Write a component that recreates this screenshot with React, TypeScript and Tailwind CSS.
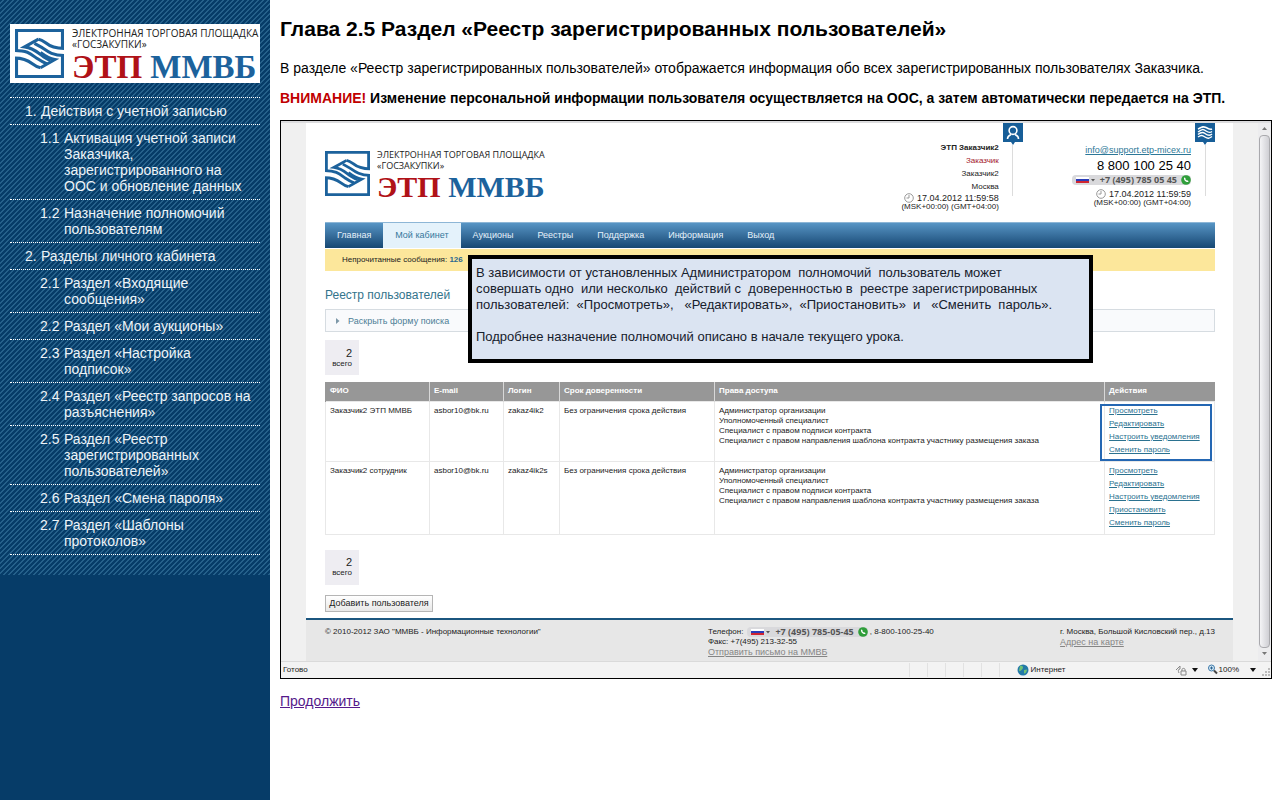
import React from "react";

type Item = { num: string; title: string; level: 1 | 2 };

const menu: Item[] = [
  { num: "1.", title: "Действия с учетной записью", level: 1 },
  { num: "1.1", title: "Активация учетной записи Заказчика, зарегистрированного на ООС и обновление данных", level: 2 },
  { num: "1.2", title: "Назначение полномочий пользователям", level: 2 },
  { num: "2.", title: "Разделы личного кабинета", level: 1 },
  { num: "2.1", title: "Раздел «Входящие сообщения»", level: 2 },
  { num: "2.2", title: "Раздел «Мои аукционы»", level: 2 },
  { num: "2.3", title: "Раздел «Настройка подписок»", level: 2 },
  { num: "2.4", title: "Раздел «Реестр запросов на разъяснения»", level: 2 },
  { num: "2.5", title: "Раздел «Реестр зарегистрированных пользователей»", level: 2 },
  { num: "2.6", title: "Раздел «Смена пароля»", level: 2 },
  { num: "2.7", title: "Раздел «Шаблоны протоколов»", level: 2 },
];

const rights = [
  "Администратор организации",
  "Уполномоченный специалист",
  "Специалист с правом подписи контракта",
  "Специалист с правом направления шаблона контракта участнику размещения заказа",
];

const users = [
  {
    name: "Заказчик2 ЭТП ММВБ",
    login: "zakaz4ik2",
    actions: ["Просмотреть", "Редактировать", "Настроить уведомления", "Сменить пароль"],
    marked: true,
  },
  {
    name: "Заказчик2 сотрудник",
    login: "zakaz4ik2s",
    actions: ["Просмотреть", "Редактировать", "Настроить уведомления", "Приостановить", "Сменить пароль"],
    marked: false,
  },
];

function LogoMark({ className }: { className: string }) {
  return (
    <svg viewBox="0 0 48 48" className={className} fill="none" stroke="#1c629c" strokeWidth="3" aria-hidden="true">
      <path d="M1.500 20.500V1.500H46.500V19" />
      <path d="M1.500 28V46.500H46.500V26" />
      <path d="M0 21C12 21 15 24 21 28.500C24 30.500 27 32.500 31 34" />
      <path d="M0 28.500C9 28.500 13 31 17 34C19 35.500 22 37.500 25 38" />
      <path d="M48 19C37 19 33 16 30 13.500C28 12 26 10.500 23 10" />
      <path d="M48 26C37 26 32 22 27 18.500L19 14" />
      <path d="M23 10L9.500 17.500C18 18.500 22 23 27 26.500C30 28.500 32 30 35 30.500" />
      <path d="M25 38L39 30C33 29 29 26 25 23" />
    </svg>
  );
}

function Brand({ small = false }: { small?: boolean }) {
  return (
    <div className={small ? "flex gap-[7px]" : "flex gap-2"}>
      <LogoMark className={small ? "mt-[2px] size-[45px] shrink-0" : "mt-px size-[49px] shrink-0"} />
      <div className="whitespace-nowrap text-[#222]">
        <div
          className={
            small
              ? "font-['Open_Sans','Noto_Sans',sans-serif] text-[9px] leading-[11px]"
              : "font-['Open_Sans','Noto_Sans',sans-serif] text-[10px] leading-[11px]"
          }
        >
          ЭЛЕКТРОННАЯ ТОРГОВАЯ ПЛОЩАДКА
          <br />
          «ГОСЗАКУПКИ»
        </div>
        <div
          className={
            small
              ? "font-['Liberation_Serif',serif] text-[30px] font-bold leading-[31px] text-[#1c629c]"
              : "font-['Liberation_Serif',serif] text-[33px] font-bold leading-[34px] text-[#1c629c]"
          }
        >
          <span className="text-[#b01218]">ЭТП</span> ММВБ
        </div>
      </div>
    </div>
  );
}

function Clock() {
  return (
    <svg viewBox="0 0 10 10" className="size-[10px]" fill="none" stroke="#999" aria-hidden="true">
      <circle cx="5" cy="5" r="4.300" />
      <path d="M5 2V5H2.500" />
    </svg>
  );
}

function Phone({ number }: { number: string }) {
  return (
    <span className="inline-flex h-[10px] items-center gap-1 rounded-sm bg-[#d9d9dc] pl-1 font-['Open_Sans',sans-serif] text-[9px] font-bold leading-[10px] text-[#555]">
      <svg viewBox="0 0 20 8" className="h-2 w-5" aria-hidden="true">
        <path d="M0 1H13V3H0Z" fill="#fff" />
        <path d="M0 3H13V5H0Z" fill="#2a3cb8" />
        <path d="M0 5H13V7H0Z" fill="#d02531" />
        <path d="M15 3H19L17 5.500Z" fill="#555" />
      </svg>
      {number}
      <svg viewBox="0 0 10 10" className="size-[10px]" aria-hidden="true">
        <circle cx="5" cy="5" r="4.800" fill="#2f9e3a" />
        <path d="M3 2.500C2.500 5 5 7.500 7.500 7L7 5.500L5.800 5.600L4.400 4.200L4.500 3Z" fill="#fff" />
      </svg>
    </span>
  );
}

function Badge({ kind }: { kind: "user" | "brand" }) {
  return (
    <div className="flex w-5 flex-col items-center">
      <svg viewBox="0 0 20 22" className="h-[22px] w-5 shrink-0" fill="none" aria-hidden="true">
        <path d="M0 0H20V19H12L10 22L8 19H0Z" fill="#175e98" />
        {kind === "user" ? (
          <g stroke="#fff" strokeWidth="1.600">
            <circle cx="10" cy="7.500" r="3.900" />
            <path d="M4.500 16C4.500 13 6 12.500 8 11.500M15.500 16C15.500 13 14 12.500 12 11.500" />
          </g>
        ) : (
          <g stroke="#fff" strokeWidth="1.500">
            <path d="M3 6C7 4 8 3 11 4.500S15 7 17 6" />
            <path d="M3 9C7 6 8 6 11 8S15 10 17 8.500" />
            <path d="M3 11.500C6 9 8 9 10 10.500S15 13 17 11" />
            <path d="M3 14C6 12 7 12 10 14S14 15.500 17 13.500" />
          </g>
        )}
      </svg>
      <div className="w-px grow bg-[#dcdcdc]" />
    </div>
  );
}

function Total() {
  return (
    <div className="flex h-[35px] w-[34px] flex-col items-end justify-center bg-[#eeedf2] pr-[7px] text-[8px] leading-[10px] text-[#222]">
      <span className="text-[11px] leading-3">2</span>
      <span>всего</span>
    </div>
  );
}

function Stamp({ time }: { time: string }) {
  return (
    <>
      <div className="flex items-center justify-end gap-[3px] text-[9px] leading-[10px] text-[#222]">
        <Clock />
        {time}
      </div>
      <div className="text-[8px] leading-[8px]">(MSK+00:00) (GMT+04:00)</div>
    </>
  );
}

const nav = ["Главная", "Мой кабинет", "Аукционы", "Реестры", "Поддержка", "Информация", "Выход"];

export default function App() {
  return (
    <div className="flex min-h-screen bg-white font-['Liberation_Sans',Arial,sans-serif] text-black">
      <aside className="w-[270px] shrink-0 bg-[#063c68] text-[14px] leading-4 text-[#eef4f8]">
        <div className="bg-[linear-gradient(135deg,#063c68_25%,#25608a_25%_50%,#063c68_50%_75%,#25608a_75%)] bg-[length:5px_5px] px-[10px] pb-5 pt-6">
          <div className="h-[59px] bg-white py-1 pl-[5px]">
            <Brand />
          </div>
          <nav className="mt-[14px] border-t border-dotted border-white">
            {menu.map((m) => (
              <a
                key={m.num}
                href="#"
                className={
                  m.level === 1
                    ? "flex border-b border-dotted border-white py-[5px] pl-[15px] pr-[6px]"
                    : "flex border-b border-dotted border-white py-[5px] pl-[30px] pr-[6px]"
                }
              >
                <span className={m.level === 1 ? "w-4 shrink-0" : "w-6 shrink-0"}>{m.num}</span>
                <span>{m.title}</span>
              </a>
            ))}
          </nav>
        </div>
      </aside>

      <main className="min-w-0 grow pl-[10px] pr-2 pt-[17px] text-[14px] leading-4">
        <h1 className="text-[21px] font-bold leading-6">Глава 2.5 Раздел «Реестр зарегистрированных пользователей»</h1>
        <p className="mt-[19px]">
          В разделе «Реестр зарегистрированных пользователей» отображается информация обо всех зарегистрированных пользователях Заказчика.
        </p>
        <p className="mt-[14px] font-bold">
          <span className="text-[#c00000]">ВНИМАНИЕ!</span> Изменение персональной информации пользователя осуществляется на ООС, а затем автоматически передается на ЭТП.
        </p>

        <div className="mt-[14px] border border-black bg-[#f0f0f0] text-[8px] leading-[10px] text-[#222]">
          <div className="flex border-t-2 border-[#dcdcde]">
            <div className="mx-[25px] min-w-0 grow bg-white">
              <div className="pl-[19px] pr-[18px]">
                <header className="flex h-[99px] items-start">
                  <div className="mt-[26px] grow">
                    <Brand small />
                  </div>
                  <div className="flex h-[73px] gap-1 text-right">
                    <div className="pt-[18px]">
                      <div className="leading-[13px]">
                        <div className="font-bold">ЭТП Заказчик2</div>
                        <div className="text-[#a3202c]">Заказчик</div>
                        <div>Заказчик2</div>
                        <div>Москва</div>
                      </div>
                      <Stamp time="17.04.2012 11:59:58" />
                    </div>
                    <Badge kind="user" />
                  </div>
                  <div className="ml-[49px] flex h-[73px] gap-1 text-right">
                    <div className="pt-5">
                      <a href="#" className="block text-[9px] leading-[14px] text-[#2c7797] underline">
                        info@support.etp-micex.ru
                      </a>
                      <div className="text-[13px] leading-[18px] text-black">8 800 100 25 40</div>
                      <div className="flex h-[14px] items-start justify-end">
                        <Phone number="+7 (495) 785 05 45" />
                      </div>
                      <Stamp time="17.04.2012 11:59:59" />
                    </div>
                    <Badge kind="brand" />
                  </div>
                </header>

                <div className="relative">
                  <nav className="flex h-[26px] border-t border-[#8db6d6] bg-linear-to-b from-[#5795c5] to-[#174873] text-[9px] leading-[25px] text-[#e6f1fa]">
                    {nav.map((n) => (
                      <a
                        key={n}
                        href="#"
                        className={n === "Мой кабинет" ? "bg-[#e4f2fb] px-3 text-[#34779c]" : "px-3"}
                      >
                        {n}
                      </a>
                    ))}
                  </nav>
                  <div className="mt-px h-[22px] bg-[#fce79b] pl-[17px] leading-[22px]">
                    Непрочитанные сообщения: <b className="text-[#2b6790]">126</b>
                  </div>
                  <h2 className="mt-4 text-[12px] leading-4 text-[#33748c]">Реестр пользователей</h2>
                  <a href="#" className="mt-[6px] flex h-[23px] items-center gap-2 border border-[#d6dce1] bg-[#f9fafc] pl-[10px] text-[9px] leading-3 text-[#4d7e96]">
                    <svg viewBox="0 0 4 6" className="h-[6px] w-1" aria-hidden="true">
                      <path d="M0 0L3.500 3L0 6Z" fill="#7d98a8" />
                    </svg>
                    Раскрыть форму поиска
                  </a>
                  <div className="absolute left-[143px] right-[122px] top-[33px] h-[108px] whitespace-pre border-4 border-black bg-[#dbe4f2] px-1 pt-[6px] text-[13px] leading-4 text-[#16202c]">
                    {
                      "В зависимости от установленных Администратором  полномочий  пользователь может\nсовершать одно  или несколько  действий с  доверенностью в  реестре зарегистрированных\nпользователей:  «Просмотреть»,   «Редактировать»,  «Приостановить»  и   «Сменить  пароль».\n\nПодробнее назначение полномочий описано в начале текущего урока."
                    }
                  </div>
                </div>

                <div className="mt-2">
                  <Total />
                </div>

                <table className="mt-[7px] w-full table-fixed border-collapse text-left">
                  <colgroup>
                    <col className="w-[104px]" />
                    <col className="w-[74px]" />
                    <col className="w-[56px]" />
                    <col className="w-[155px]" />
                    <col />
                    <col className="w-[110px]" />
                  </colgroup>
                  <thead>
                    <tr className="h-[19px] bg-[#979797] text-white">
                      {["ФИО", "E-mail", "Логин", "Срок доверенности", "Права доступа", "Действия"].map((h) => (
                        <th key={h} className="border-l border-[#d8d8d8] px-1 font-bold first:border-[#979797]">
                          {h}
                        </th>
                      ))}
                    </tr>
                  </thead>
                  <tbody>
                    {users.map((u) => (
                      <tr key={u.login} className="align-top *:border *:border-[#e8e8e8] *:px-1 *:pt-1">
                        <td>{u.name}</td>
                        <td>asbor10@bk.ru</td>
                        <td>{u.login}</td>
                        <td>Без ограничения срока действия</td>
                        <td>
                          {rights.map((r) => (
                            <div key={r}>{r}</div>
                          ))}
                        </td>
                        <td className="relative pb-[3px]">
                          {u.marked && <div className="pointer-events-none absolute -left-[5px] bottom-0 right-[2px] top-[2px] border-2 border-[#2467b3]" />}
                          {u.actions.map((a) => (
                            <a key={a} href="#" className="mb-[3px] block text-[#2b7290] underline">
                              {a}
                            </a>
                          ))}
                        </td>
                      </tr>
                    ))}
                  </tbody>
                </table>

                <div className="mt-[15px]">
                  <Total />
                </div>
                <button type="button" className="mb-[6px] mt-[10px] block h-[17px] w-[108px] whitespace-nowrap border border-[#b5b5b5] bg-linear-to-b from-white to-[#e8e8e8] text-[9px] leading-3">
                  Добавить пользователя
                </button>
              </div>

              <footer className="flex h-[43px] border-t-2 border-[#1b567f] bg-[#e7e7e7] pl-[19px] pr-[18px] pt-[7px]">
                <div className="w-[383px] shrink-0">© 2010-2012 ЗАО "ММВБ - Информационные технологии"</div>
                <div className="grow">
                  <div className="flex items-center">
                    <span className="mr-1">Телефон:</span>
                    <Phone number="+7 (495) 785-05-45" />
                    <span className="ml-[2px]">, 8-800-100-25-40</span>
                  </div>
                  <div>Факс: +7(495) 213-32-55</div>
                  <a href="#" className="block text-[9px] text-[#858585] underline">
                    Отправить письмо на ММВБ
                  </a>
                </div>
                <div>
                  <div>г. Москва, Большой Кисловский пер., д.13</div>
                  <a href="#" className="block text-[9px] text-[#858585] underline">
                    Адрес на карте
                  </a>
                </div>
              </footer>
            </div>

            <div className="flex w-[13px] shrink-0 flex-col items-center justify-between bg-[#ececee]">
              <svg viewBox="0 0 13 12" className="h-3 w-[13px]" aria-hidden="true">
                <path d="M4 7L6.500 4L9 7Z" fill="#777" />
              </svg>
              <div className="w-[11px] grow rounded-sm border border-[#a9a9ad] bg-linear-to-r from-[#f4f4f6] to-[#cfcfd4]" />
              <svg viewBox="0 0 13 12" className="mb-px h-3 w-[13px]" aria-hidden="true">
                <path d="M4 4L6.500 7L9 4Z" fill="#777" />
              </svg>
            </div>
          </div>

          <div className="flex h-[17px] items-center border-t border-[#dadada] bg-[#f3f3f3] pl-[2px]">
            <span className="grow">Готово</span>
            <div className="flex h-[14px] w-[108px] *:w-[18px] *:border-l *:border-[#e2e2e2]">
              <i />
              <i />
              <i />
              <i />
              <i />
              <i />
            </div>
            <svg viewBox="0 0 12 12" className="size-3" aria-hidden="true">
              <circle cx="6" cy="6" r="5.500" fill="#2379a8" />
              <path d="M3 2C6 1 7 4 5 5.500S3 8 2 6.500ZM7 6L10 5.500C10 8 8 10 7 9.500Z" fill="#6fc275" />
            </svg>
            <span className="ml-[2px] w-[144px]">Интернет</span>
            <svg viewBox="0 0 12 12" className="size-3" fill="none" stroke="#888" aria-hidden="true">
              <path d="M1 6L5 2V5C3 5 3 7 4 9M6 7H11V11H6ZM7 7V5.500C7 4 10 4 10 5.500V7" />
            </svg>
            <svg viewBox="0 0 8 6" className="ml-1 h-[6px] w-2" aria-hidden="true">
              <path d="M1 1H7L4 5Z" fill="#111" />
            </svg>
            <svg viewBox="0 0 11 11" className="ml-2 size-[11px]" fill="none" aria-hidden="true">
              <circle cx="4.500" cy="4" r="3" fill="#d9ecf8" stroke="#3c78a8" />
              <path d="M3 4H6M4.500 2.500V5.500" stroke="#27618f" />
              <path d="M7 6.500L10 9.500" stroke="#444" strokeWidth="2" />
            </svg>
            <span className="ml-px">100%</span>
            <svg viewBox="0 0 8 6" className="ml-[10px] h-[6px] w-2" aria-hidden="true">
              <path d="M1 1H7L4 5Z" fill="#111" />
            </svg>
            <svg viewBox="0 0 10 10" className="ml-1 mt-1 size-[10px]" fill="#bbb" aria-hidden="true">
              <path d="M7 1h2v2H7zM7 4h2v2H7zM4 4h2v2H4zM7 7h2v2H7zM4 7h2v2H4zM1 7h2v2H1z" />
            </svg>
          </div>
        </div>

        <a href="#" className="mt-[14px] inline-block text-[#551a8b] underline">
          Продолжить
        </a>
      </main>
    </div>
  );
}
